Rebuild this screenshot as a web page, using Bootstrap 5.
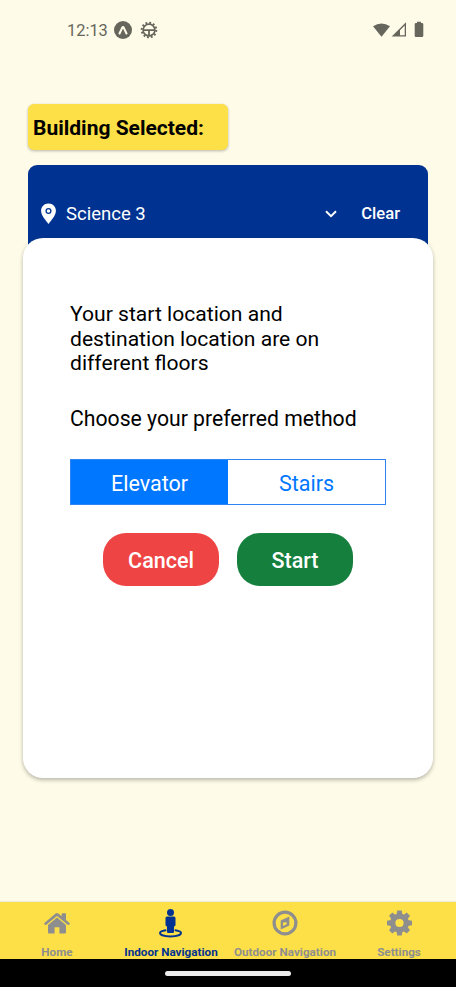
<!DOCTYPE html>
<html lang="en">
<head>
<meta charset="utf-8">
<meta name="viewport" content="width=device-width, initial-scale=1">
<title>Indoor Navigation</title>
<link href="https://cdn.jsdelivr.net/npm/bootstrap@5.3.0/dist/css/bootstrap.min.css" rel="stylesheet">
<style>
  body { font-family: Roboto, sans-serif; background: #fefbe8; color: #000; height: 987px; overflow: hidden; }
  svg { display: block; flex: none; }
  .status { height: 60px; padding: 0 31px 0 67px; color: #66665c; font-size: 16.4px; }
  .status-time { padding-top: 2px; }
  .status-icons { margin-left: 6px; gap: 8px; }
  .main-area { padding: 44px 23px 0; }
  .heading-tag { width: 200px; height: 46px; margin-left: 5px; padding: 3px 0 0 5px; border-radius: 6px; background: #fde047; box-shadow: 0 1px 3px rgba(0,0,0,.28); font-size: 21px; font-weight: 700; line-height: 1; }
  .picker { height: 98px; margin: 15px 5px 0; padding: 0 28px 0 12px; border-radius: 9px; background: #003391; color: #fff; font-size: 18.5px; }
  .picker-name { margin-left: 9px; padding-top: 2px; }
  .clear-btn { font-size: 16.6px; font-weight: 500; }
  .dialog { height: 540px; margin-top: -25px; padding: 64px 47px 0; border-radius: 20px; background: #fff; box-shadow: 0 2px 4px rgba(0,0,0,.28); font-size: 21.1px; line-height: 24.5px; }
  .method-label { margin-top: 31px; font-size: 21.2px; }
  .segments { height: 46px; margin-top: 28px; border: 1px solid #2f83f5; background: #fff; }
  .segments .btn { --bs-btn-border-width: 0; --bs-btn-border-radius: 0; --bs-btn-padding-y: 0; --bs-btn-font-size: 21.5px; --bs-btn-color: #0077ff; font-family: inherit; padding-top: 4px; }
  .segments .btn.active { --bs-btn-active-bg: #0077ff; --bs-btn-active-color: #fff; }
  .action-row { gap: 18px; margin-top: 28px; }
  .action { width: 116px; height: 53px; padding: 4px 0 0; border: 0; border-radius: 23px; color: #fff; font-size: 21.5px; font-weight: 500; }
  .stop { background: #ef4444; }
  .go { background: #15803d; }
  .tabs { height: 57px; background: #fde047; color: #8e8e8f; font-size: 11.7px; font-weight: 700; box-shadow: 0 -1px 1px rgba(0,0,0,.06); }
  .tabs .nav-link { color: inherit; padding: 5px 0 0; width: 114px; white-space: nowrap; line-height: 14px; }
  .tabs .nav-link.active { color: #003391; }
  .tabs svg { margin-bottom: 6px; }
  .gesture { height: 28px; background: #000; }
  .gesture-pill { width: 126px; height: 5px; background: #ececec; }
</style>
<script src="https://cdn.jsdelivr.net/npm/bootstrap@5.3.0/dist/js/bootstrap.bundle.min.js"></script>
</head>
<body class="d-flex flex-column">
  <header class="status d-flex align-items-center">
    <span class="status-time">12:13</span>
    <div class="status-icons d-flex">
      <svg width="18" height="18" viewBox="0 0 18 18"><circle cx="9" cy="9" r="9" fill="currentColor"/><path d="M5.500 12.500 8.300 6.600q.7-1.300 1.400 0l2.800 5.900" fill="none" stroke="#fefbe8" stroke-width="2.100" stroke-linecap="round"/></svg>
      <svg width="18" height="18" viewBox="0 0 18 18" fill="none" stroke="currentColor"><circle cx="9" cy="9" r="7.300" stroke-width="2" stroke-dasharray="1.900 1.922"/><circle cx="9" cy="9" r="5.900" stroke-width="1.600"/><path d="M3 9.200h12M9 9.200v6" stroke-width="1.800"/></svg>
    </div>
    <svg class="ms-auto" width="52" height="18" viewBox="0 0 52 18" fill="currentColor"><path d="M0 5.200q8.500-5.400 17 0L8.500 15.800z"/><path fill-rule="evenodd" d="M33 1.300v14.300H18.700zm-1.300 3.200L27 9.200v5.100h4.700z"/><path d="M44 2V.8h4V2h1q1.300 0 1.300 1.300v11.400q0 1.300-1.300 1.300h-6q-1.300 0-1.300-1.300V3.300q0-1.300 1.300-1.300z"/></svg>
  </header>

  <main class="main-area flex-grow-1">
    <div class="heading-tag d-flex align-items-center"><span>Building Selected:</span></div>
    <section class="picker d-flex align-items-center">
      <svg width="17" height="22" viewBox="0 0 17 22"><path fill="#fff" d="M8.500 .5C4 .5 1.100 3.800 1.100 7.800c0 4.500 4.500 9.500 7.400 13.200 2.900-3.700 7.400-8.700 7.400-13.200C15.900 3.800 13 .5 8.500.5z"/><circle cx="8.500" cy="8" r="2.400" fill="none" stroke="#003391" stroke-width="1.300"/></svg>
      <span class="picker-name">Science 3</span>
      <svg class="ms-auto" width="12" height="8" viewBox="0 0 12 8"><path d="M1 1.300l5 4.900 5-4.900" fill="none" stroke="#fff" stroke-width="1.900"/></svg>
      <span class="clear-btn ms-4">Clear</span>
    </section>

    <section class="dialog position-relative">
      <p class="mb-0">Your start location and<br>destination location are on<br>different floors</p>
      <p class="method-label mb-0">Choose your preferred method</p>
      <div class="segments d-flex">
        <button class="btn active w-50" type="button">Elevator</button>
        <button class="btn w-50" type="button">Stairs</button>
      </div>
      <div class="action-row d-flex justify-content-center">
        <button class="action stop" type="button">Cancel</button>
        <button class="action go" type="button">Start</button>
      </div>
    </section>
  </main>

  <nav class="tabs nav flex-nowrap">
    <a class="nav-link d-flex flex-column align-items-center" href="#">
      <svg width="30" height="32" viewBox="-2 -6 30 32" fill="currentColor"><path d="M13 4.600 22 12V19.600q0 .9-.9.900h-5.700v-6.200h-4.800v6.200H4.900q-.9 0-.9-.9V12z"/><path d="M13 0q.7 0 1.400.5l3.300 2.800V.8q0-.6.6-.6h3.100q.6 0 .6.6v6.100l3.600 3.100q.5.400.1.900l-.8.900q-.4.500-.9.100L13 2.900 2 11.900q-.5.400-.9-.1l-.8-.9q-.4-.5.100-.9L11.600.5Q12.300 0 13 0z"/></svg>
      <span>Home</span>
    </a>
    <a class="nav-link active d-flex flex-column align-items-center" href="#">
      <svg width="24" height="32" viewBox="0 -2 24 32"><g fill="currentColor"><circle cx="11.500" cy="3.500" r="3.500"/><path d="M8 7.600h7q1.500 0 1.500 1.500V16q0 1.200-1.500 1.400V23q0 1.100-1.100 1.100H9.100q-1.100 0-1.100-1.100v-5.600Q6.500 17.200 6.500 16V9.100Q6.500 7.600 8 7.600z"/></g><path d="M6.500 21.300C3 21.900 1 22.900 1 24.100c0 1.900 4.500 3.300 10.500 3.300s10.500-1.400 10.500-3.300c0-1.200-2-2.200-5.500-2.800" fill="none" stroke="currentColor" stroke-width="2" stroke-linecap="round"/></svg>
      <span>Indoor Navigation</span>
    </a>
    <a class="nav-link d-flex flex-column align-items-center" href="#">
      <svg width="26" height="32" viewBox="0 -3 26 32"><circle cx="13" cy="13" r="10.900" fill="none" stroke="currentColor" stroke-width="3.200"/><path fill="currentColor" fill-rule="evenodd" d="M17.300 6.400v9.100L8.700 19.600v-9.100zM11 12.600v3.500l3.700-1.800-.1-2z"/></svg>
      <span>Outdoor Navigation</span>
    </a>
    <a class="nav-link d-flex flex-column align-items-center" href="#">
      <svg width="26" height="32" viewBox="-13.500 -16 26 32"><g fill="currentColor"><path id="tooth" d="M-3-8-2.300-12.500h4.600L3-8z"/><use href="#tooth" transform="rotate(45)"/><use href="#tooth" transform="rotate(90)"/><use href="#tooth" transform="rotate(135)"/><use href="#tooth" transform="rotate(180)"/><use href="#tooth" transform="rotate(225)"/><use href="#tooth" transform="rotate(270)"/><use href="#tooth" transform="rotate(315)"/></g><circle r="6.800" fill="none" stroke="currentColor" stroke-width="5.400"/></svg>
      <span>Settings</span>
    </a>
  </nav>
  <footer class="gesture d-flex justify-content-center align-items-center"><div class="gesture-pill rounded-pill"></div></footer>
</body>
</html>
